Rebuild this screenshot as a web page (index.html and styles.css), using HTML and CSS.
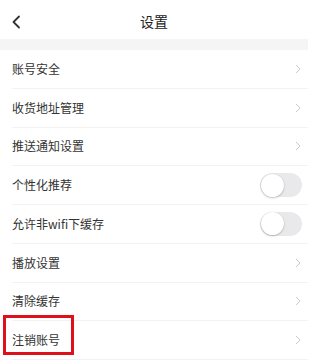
FILE: index.html
```html
<!DOCTYPE html>
<html lang="zh">
<head>
<meta charset="utf-8">
<link rel="stylesheet" href="styles.css">
</head>
<body>
<div class="page">
  <header class="topbar">
    <svg class="back" width="10" height="14" viewBox="0 0 10 14"><path d="M8 1.5 L2.5 7 L8 12.5" fill="none" stroke="#333" stroke-width="1.8" stroke-linecap="round" stroke-linejoin="round"/></svg>
    <div class="title">设置</div>
  </header>
  <div class="band"></div>
  <ul class="list">
    <li class="row"><div class="inner"><span class="label">账号安全</span><svg class="chev" width="6" height="10" viewBox="0 0 6 10"><path d="M1 1 L5 5 L1 9" fill="none" stroke="#c9c9c9" stroke-width="1"/></svg></div></li>
    <li class="row"><div class="inner"><span class="label">收货地址管理</span><svg class="chev" width="6" height="10" viewBox="0 0 6 10"><path d="M1 1 L5 5 L1 9" fill="none" stroke="#c9c9c9" stroke-width="1"/></svg></div></li>
    <li class="row"><div class="inner"><span class="label">推送通知设置</span><svg class="chev" width="6" height="10" viewBox="0 0 6 10"><path d="M1 1 L5 5 L1 9" fill="none" stroke="#c9c9c9" stroke-width="1"/></svg></div></li>
    <li class="row"><div class="inner"><span class="label">个性化推荐</span><span class="toggle"><span class="knob"></span></span></div></li>
    <li class="row"><div class="inner"><span class="label">允许非wifi下缓存</span><span class="toggle"><span class="knob"></span></span></div></li>
    <li class="row"><div class="inner"><span class="label">播放设置</span><svg class="chev" width="6" height="10" viewBox="0 0 6 10"><path d="M1 1 L5 5 L1 9" fill="none" stroke="#c9c9c9" stroke-width="1"/></svg></div></li>
    <li class="row"><div class="inner"><span class="label">清除缓存</span><svg class="chev" width="6" height="10" viewBox="0 0 6 10"><path d="M1 1 L5 5 L1 9" fill="none" stroke="#c9c9c9" stroke-width="1"/></svg></div></li>
    <li class="row"><div class="inner"><span class="label">注销账号</span><svg class="chev" width="6" height="10" viewBox="0 0 6 10"><path d="M1 1 L5 5 L1 9" fill="none" stroke="#c9c9c9" stroke-width="1"/></svg></div></li>
  </ul>
  <div class="highlight"></div>
</div>
</body>
</html>
```
FILE: styles.css
```css
* { box-sizing: border-box; }
html, body { margin: 0; padding: 0; background: #fff; }
body {
  font-family: "Noto Sans CJK SC", "Noto Sans", sans-serif;
  color: #333;
  width: 308px;
  height: 362px;
  overflow: hidden;
}
.page { position: relative; width: 308px; height: 362px; }
.topbar {
  height: 39px;
  display: flex;
  align-items: center;
  justify-content: center;
  position: relative;
}
.back { position: absolute; left: 11px; top: 15px; }
.title { font-size: 14px; color: #222; line-height: 1; margin-top: 2px; }
.band { height: 11px; background: #f5f5f6; }
.list { list-style: none; margin: 0; padding: 0; }
.row { padding-left: 12px; }
.inner {
  height: 38.75px;
  display: flex;
  align-items: center;
  justify-content: space-between;
  padding-right: 7px;
  border-bottom: 1px solid #f2f2f2;
}
.label { font-size: 12px; color: #333; line-height: 1; }
.chev { display: block; }
.toggle {
  width: 42px;
  height: 24px;
  border-radius: 12px;
  background: #e9e9eb;
  position: relative;
  margin-right: -1px;
}
.knob {
  position: absolute;
  left: 0.5px;
  top: 0.5px;
  width: 23px;
  height: 23px;
  border-radius: 50%;
  background: #fff;
  box-shadow: 0 1px 2px rgba(0,0,0,0.22), 0 0 0 0.5px rgba(0,0,0,0.06);
}
.highlight {
  position: absolute;
  left: 3px;
  top: 315px;
  width: 71px;
  height: 40px;
  border: 3px solid #dd101b;
}
```
